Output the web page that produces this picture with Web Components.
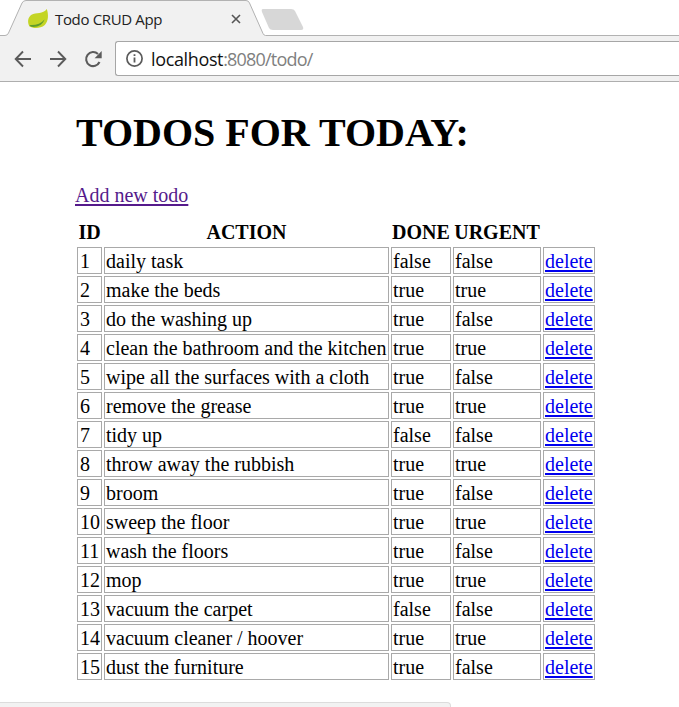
<!DOCTYPE html>
<html lang="en"><head><meta charset="utf-8"><title>Todo CRUD App</title>
<style>html,body{margin:0;height:707px;overflow:hidden;background:#fff}</style></head>
<body><todo-window></todo-window>
<script>
const define=(name,html,setup)=>customElements.define(name,class extends HTMLElement{
  constructor(){super();const t=document.createElement('template');t.innerHTML=html;
    this.attachShadow({mode:'open'}).append(t.content.cloneNode(true));}
  connectedCallback(){if(setup)setup(this,this.shadowRoot);}
});
define('browser-tabs',`<style>
:host{display:block;position:relative;height:36px;font:15px/20px "Open Sans","Noto Sans",sans-serif;color:#222}
.shape{position:absolute;inset:0;display:block}
.row{position:relative;display:flex;align-items:center;height:38px;padding-left:27px}
.leaf{width:22px;height:22px;flex:none}
.title{width:181px;padding-left:6px;box-sizing:border-box;white-space:nowrap;letter-spacing:-.35px;margin-top:-1px}
.close{width:12px;height:12px}
</style>
<svg class="shape" width="679" height="36" viewBox="0 0 679 36">
<path d="M0 36V35.5H4Q7.5 35.5 9 32L22 3Q23.2.5 26 .5H246Q248.500.5 249.500 3L262.500 32Q264 35.500 266 35.500H679V36Z" fill="#f1f1f1"/>
<path d="M0 35.500H5Q7.500 35.500 8.500 33L22 3Q23.200 .5 26 .5H246Q248.500 .5 249.500 3L263 33.500Q264 35.500 265.500 35.500H679" fill="none" stroke="#b2b2b2"/>
<path d="M263 9H291Q294 9 295 11L303 27Q304 30 301 30H273Q270 30 269 28L262 12Q261 9 263 9Z" fill="#d7d7d7"/>
</svg>
<div class="row"><svg class="leaf" viewBox="27 9 22 22">
<path d="M46.800 10C48.500 15 48.800 22 44.800 26C40 30 33 29.500 29.500 27.500C27 23 28 18 31.500 15.800C36 13.300 43 15.500 46.800 10Z" fill="#c4d525"/>
<path d="M44.500 20.500C41 24.500 36 26.500 29.500 26L31 27.800C38 28.500 43 25.500 44.500 20.500Z" fill="#5f9d2d"/></svg>
<span class="title">Todo CRUD App</span>
<svg class="close" viewBox="0 0 12 12"><path d="M2 2L10 10M10 2L2 10" stroke="#555" stroke-width="1.600"/></svg></div>`);
define('browser-toolbar',`<style>
:host{display:flex;height:45px;background:#f1f1f1;border-bottom:1px solid #aeaeae;box-sizing:content-box}
.icons{width:115px;flex:none}
.url{display:flex;align-items:center;flex:1;box-sizing:border-box;height:35px;margin-top:5px;border:1px solid #a6a6a6;border-right:0;border-radius:3px 0 0 3px;background:#fff;padding-left:9px;font:18px/32px "Open Sans","Noto Sans",sans-serif;color:#808080;white-space:nowrap}
.text{padding-left:7px;letter-spacing:-.8px}
.host{color:#111;letter-spacing:-.36px}
</style>
<svg class="icons" height="45" viewBox="0 36 115 45" fill="none" stroke="#5b5b5b" stroke-width="1.900">
<path d="M31 59H16M23 51.500L15.700 59L23 66.500M50 59H65M58 51.500L65.300 59L58 66.500"/>
<path d="M99.500 62A7 7 0 1 1 98 54" stroke-width="2.100"/><path d="M101.700 51V58.200H94.600Z" fill="#5b5b5b" stroke="none"/></svg>
<div class="url"><svg width="19" height="19" viewBox="0 0 19 19"><circle cx="9.500" cy="9.500" r="7.600" fill="none" stroke="#5b5b5b" stroke-width="1.700"/><path d="M8.600 8.500H10.400V13.500H8.600ZM8.600 5.300H10.400V7.100H8.600Z" fill="#5b5b5b"/></svg>
<span class="text"><span class="host">localhost</span>:8080/todo/</span></div>`);
define('todo-cell',`<style>
:host{display:block;box-sizing:border-box;height:27px;border:1px solid #a9a9a9;padding:0 0 0 1px;line-height:27px;white-space:nowrap}
:host([head]){border-color:transparent;padding:0;font-weight:bold;text-align:center}
:host([index]){padding-left:2px}
:host([link]){color:#00e;text-decoration:underline;text-decoration-thickness:2px;text-underline-offset:2px}
</style><slot></slot>`);
define('todo-table',`<style>
:host{display:grid;grid-template-columns:25px 285px 60px 88px 52px;gap:2px;margin-left:2px}
</style>`,(el,root)=>{
 const add=(text,attr)=>{const c=document.createElement('todo-cell');c.textContent=text;if(attr)c.setAttribute(attr,'');root.append(c);};
 ['ID','ACTION','DONE','URGENT',''].forEach(t=>add(t,'head'));
 [['daily task',0,0],['make the beds',1,1],['do the washing up',1,0],['clean the bathroom and the kitchen',1,1],['wipe all the surfaces with a cloth',1,0],['remove the grease',1,1],['tidy up',0,0],['throw away the rubbish',1,1],['broom',1,0],['sweep the floor',1,1],['wash the floors',1,0],['mop',1,1],['vacuum the carpet',0,0],['vacuum cleaner / hoover',1,1],['dust the furniture',1,0]]
 .forEach(([a,d,u],i)=>{add(i+1,'index');add(a);add(!!d);add(!!u);add('delete','link');});
});
define('status-bubble',`<style>:host{display:block;box-sizing:border-box;width:451px;height:5px;background:#f2f2f2;border:1px solid #dcdcdc;border-width:1px 1px 0 0;border-radius:0 4px 0 0}</style>`);
define('todo-window',`<style>
:host{display:flex;flex-direction:column;height:707px;overflow:hidden;font:20px "Liberation Serif","Times New Roman",serif;color:#000}
main{flex:1;padding:28px 0 0 75px}
h1{margin:0 0 0 1px;font-size:40px;line-height:46px;white-space:nowrap}
.add{display:block;width:max-content;margin:27px 0 11px;line-height:24px;color:#551a8b;text-decoration:underline;text-decoration-thickness:2px;text-underline-offset:2px}
</style><browser-tabs></browser-tabs><browser-toolbar></browser-toolbar>
<main><h1>TODOS FOR TODAY:</h1><a class="add">Add new todo</a><todo-table></todo-table></main><status-bubble></status-bubble>`);
</script></body></html>
